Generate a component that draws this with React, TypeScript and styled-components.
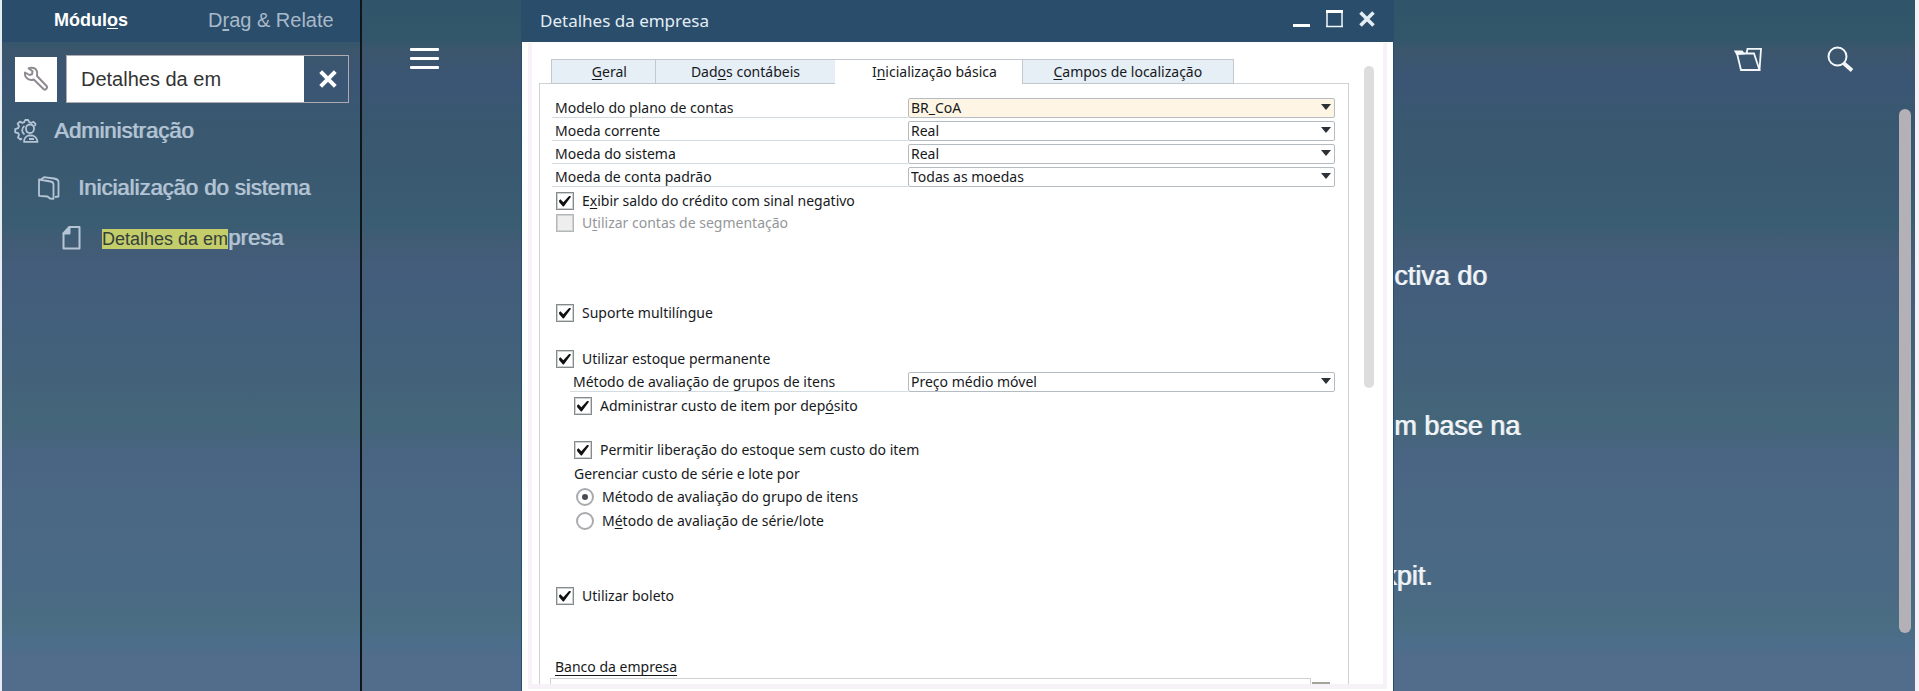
import React, { useState } from 'react';
import styled, { createGlobalStyle, css } from 'styled-components';

const uiFont = '"Liberation Sans", Arial, sans-serif';
const formFont = '"Noto Sans", "Open Sans", sans-serif';

const GlobalStyle = createGlobalStyle`
  * { box-sizing: border-box; }
  body { margin: 0; font-family: ${uiFont}; background: #f6f3f7; }
  button { border: 0; padding: 0; background: none; color: inherit; font: inherit; cursor: pointer; }
  svg { display: block; }
`;

const Desktop = styled.div`
  display: flex;
  min-height: 100vh;
  border-left: 2px solid #e6ecf0;
  border-right: 4px solid #f6f1f6;
  background: linear-gradient(
    #30556a 0, #32576a 38px, #3b566c 50px, #3b5575 80px, #395870 120px,
    #3a5a72 190px, #3a5d72 225px, #425c76 245px, #435d7b 270px, #425f7b 320px,
    #43627a 380px, #446679 425px, #4a6484 460px, #4a6884 500px, #4a6984 585px,
    #4a6d82 622px, #4c6e8c 645px, #526c8b 658px, #526d8c 100%
  );
`;

/* ---------- sidebar ---------- */

const Sidebar = styled.aside`
  flex: 0 0 360px;
  min-width: 0;
  border-right: 2px solid #10151a;
`;

const SidebarTabs = styled.div`
  display: flex;
  gap: 80px;
  height: 42px;
  padding: 0 0 2px 52px;
  align-items: center;
  background: #2a4d6b;
`;

const SidebarTab = styled.button<{ $active?: boolean }>`
  font-size: ${p => (p.$active ? 18 : 20)}px;
  font-weight: ${p => (p.$active ? 700 : 400)};
  line-height: 24px;
  color: ${p => (p.$active ? '#fff' : '#a9b9c9')};
`;

const SearchRow = styled.div`
  display: flex;
  align-items: center;
  gap: 9px;
  padding: 13px 11px 0 13px;
`;

const ToolButton = styled.button`
  display: grid;
  flex: none;
  place-items: center;
  width: 42px;
  height: 45px;
  background: #fff;
  color: #8f8a92;
`;

const SearchBox = styled.div`
  display: flex;
  flex: 1;
  min-width: 0;
  height: 48px;
  border: 1px solid #b0abae;
`;

const SearchInput = styled.input`
  flex: 1;
  min-width: 0;
  border: 0;
  outline: 0;
  padding: 0 14px;
  background: #fff;
  color: #333;
  font: 20px ${uiFont};
`;

const ClearButton = styled.button`
  display: grid;
  flex: none;
  place-items: center;
  width: 44px;
  padding-left: 3px;
  color: #fff;
`;

const Tree = styled.ul`
  list-style: none;
  margin: 0;
  padding: 14px 0 0 12px;
`;

const TreeItem = styled.li<{ $level: number }>`
  display: flex;
  align-items: center;
  height: ${p => (p.$level ? 50 : 28)}px;
  margin-top: ${p => (p.$level === 1 ? 18 : 0)}px;
  padding-left: ${p => p.$level * 24}px;
  color: #b5c5d5;
`;

const TreeIcon = styled.span`
  flex: none;
  width: 40px;
`;

const TreeLink = styled.a`
  color: inherit;
  font-size: 22px;
  line-height: 24px;
  text-decoration: none;
  text-shadow: 1px 0 0 rgba(181, 197, 213, 0.8);
  white-space: nowrap;
`;

const Match = styled.mark`
  background: #c3cd6a;
  color: #35403c;
  font-size: 18px;
  text-shadow: none;
`;

/* ---------- cockpit behind the window ---------- */

const MenuStrip = styled.nav`
  flex: 0 0 159px;
  padding: 48px 0 0 48px;
`;

const MenuButton = styled.button`
  display: flex;
  flex-direction: column;
  gap: 6px;
  width: 29px;
`;

const MenuLine = styled.span`
  height: 3px;
  width: 100%;
  border-radius: 1px;
  background: #fff;
`;

const Cockpit = styled.main`
  flex: 0 0 521px;
  display: flex;
  overflow: hidden;
`;

const CockpitContent = styled.div`
  flex: 1;
`;

const CockpitActions = styled.div`
  display: flex;
  justify-content: flex-end;
  gap: 64px;
  height: 261px;
  padding: 46px 45px 0 0;
  color: #f4f7fa;
`;

const IconButton = styled.button`
  width: 28px;
  height: 28px;
`;

const CockpitText = styled.p<{ $cut?: boolean }>`
  margin: 0 0 120px;
  text-indent: ${p => (p.$cut ? -11 : 0)}px;
  color: #f1f4f8;
  font-size: 27px;
  line-height: 30px;
  text-shadow: 1px 0 0 rgba(241, 244, 248, 0.8);
  white-space: nowrap;
`;

const ScrollThumb = styled.span<{ $wide?: boolean }>`
  flex: none;
  display: block;
  border-radius: 6px;
  ${p =>
    p.$wide
      ? css`width: 12px; height: 524px; margin: 109px 4px 0 0; background: #b3b1b5;`
      : css`width: 10px; height: 322px; margin: 23px 9px 0 15px; background: #ddd;`}
`;

/* ---------- company details window ---------- */

const Window = styled.section`
  flex: 1;
  display: flex;
  flex-direction: column;
  min-width: 0;
  border: solid #2a4d6b;
  border-width: 0 1px;
  background: #fff;
  color: #16191c;
  font-family: ${formFont};
`;

const TitleBar = styled.header`
  display: flex;
  align-items: center;
  height: 42px;
  padding: 0 18px;
  background: #2a4d6b;
  color: #e4edf5;
`;

const Title = styled.h1`
  flex: 1;
  margin: 0;
  font-size: 17px;
  font-weight: 400;
  line-height: 24px;
`;

const WindowButtons = styled.div`
  display: flex;
  gap: 15px;
  padding-bottom: 4px;
`;

const WindowBody = styled.div`
  display: flex;
  margin: 1px 6px 3px;
  border: solid #f7f2f7;
  border-width: 0 4px 5px;
`;

const Sheet = styled.div`
  flex: 1;
  min-width: 0;
  padding: 16px 0 0 7px;
`;

const Tabs = styled.div`
  display: flex;
  height: 25px;
  margin: 0 115px -1px 12px;
`;

const Tab = styled.button<{ $active?: boolean; $grow: number; $inset?: boolean }>`
  flex: ${p => p.$grow} 1 0;
  text-indent: ${p => (p.$inset ? 12 : 0)}px;
  border: 1px solid #c3c8ce;
  border-left-width: ${p => (p.$active ? 0 : 1)}px;
  border-bottom-color: ${p => (p.$active ? '#fff' : '#c3c8ce')};
  background: ${p => (p.$active ? '#fff' : '#e6eef6')};
  color: #16191c;
  font-size: 14px;
  line-height: 20px;
  white-space: nowrap;
  & + & { margin-left: ${p => (p.$active ? 0 : -1)}px; }
`;

const Panel = styled.form`
  padding: 14px 13px 0 12px;
  border: 1px solid #cfd2d5;
  border-bottom: 0;
`;

const Group = styled.div<{ $space?: number; $indent?: boolean }>`
  margin-top: ${p => p.$space ?? 0}px;
  margin-left: ${p => (p.$indent ? 18 : 0)}px;
`;

const FieldRow = styled.div<{ $nested?: boolean }>`
  display: grid;
  grid-template-columns: ${p => (p.$nested ? 338 : 356)}px 1fr;
  height: 20px;
  margin-bottom: 3px;
`;

const FieldLabel = styled.label`
  padding-left: 3px;
  border-bottom: 1px solid #d2dce1;
  font-size: 14px;
  line-height: 19px;
`;

const SelectWrap = styled.div`
  position: relative;
  &::after {
    content: '';
    position: absolute;
    top: 6px;
    right: 4px;
    border: 5px solid transparent;
    border-top: 6px solid #2c3136;
    border-bottom: 0;
    pointer-events: none;
  }
`;

const Select = styled.select<{ $focused?: boolean }>`
  display: block;
  appearance: none;
  width: 100%;
  height: 20px;
  margin: 0;
  padding: 0 2px;
  border: 1px solid #b5bcc1;
  border-radius: 2px;
  outline: 0;
  background: ${p => (p.$focused ? '#fff5e5' : '#fff')};
  color: #16191c;
  font: 14px/18px ${formFont};
`;

const Option = styled.label<{ $disabled?: boolean; $tall?: boolean }>`
  display: flex;
  align-items: center;
  gap: 8px;
  height: ${p => (p.$tall ? 24 : 22)}px;
  padding-left: ${p => (p.$tall ? 6 : 4)}px;
  color: ${p => (p.$disabled ? '#94979a' : '#16191c')};
  font-size: 14px;
  line-height: 20px;
`;

const Check = styled.input`
  appearance: none;
  display: grid;
  place-items: center;
  width: 18px;
  height: 18px;
  margin: 0;
  border: 1px solid #858b8d;
  box-shadow: inset 0 0 0 1px #cfd2d2;
  background: #fff;
  &:disabled { background: #eee; border-color: #b4b7b7; }
  &:checked::before {
    content: '';
    width: 12px;
    height: 11px;
    background: #111;
    clip-path: polygon(0 45%, 12% 34%, 36% 62%, 88% 0, 100% 12%, 40% 100%, 33% 100%, 2% 62%);
  }
`;

const Radio = styled.input`
  appearance: none;
  display: grid;
  place-items: center;
  width: 18px;
  height: 18px;
  margin: 0;
  border: 2px solid #aaabb0;
  border-radius: 50%;
  background: #fff;
  &:checked::before {
    content: '';
    width: 6px;
    height: 6px;
    border-radius: 50%;
    background: #4a4c55;
  }
`;

const Caption = styled.div`
  padding-left: 4px;
  font-size: 14px;
  line-height: 22px;
`;

const BankHeading = styled.h2`
  margin: 0 0 0 3px;
  font-size: 14px;
  font-weight: 400;
  line-height: 22px;
  text-decoration: underline;
  text-underline-offset: 3px;
`;

const BankRow = styled.div`
  display: flex;
  align-items: flex-end;
  gap: 1px;
  height: 6px;
  margin: 0 5px 0 -2px;
`;

const BankFrame = styled.div`
  flex: 1;
  height: 6px;
  border: 1px solid #ced2d2;
  border-bottom: 0;
`;

const BankButtonEdge = styled.span`
  width: 18px;
  height: 2px;
  background: #a3a59d;
`;

/* ---------- icons ---------- */

const Wrench = () => (
  <svg width="26" height="26" viewBox="0 0 26 26" fill="none" stroke="currentColor" strokeWidth="2" strokeLinejoin="round">
    <path d="M2 6.500 6.500 9 9 8.200 9.600 5.300 5.500 2.300C9 .8 13 2 14 5.500c.5 2-.2 3.600 0 4.500L24 20.500c.8 1-1.600 4-3 3L10.800 13.500C6 15.200 1.200 11.500 2 6.500Z" />
  </svg>
);

const Cross = ({ size }: { size: number }) => (
  <svg width={size} height={size} viewBox="0 0 16 16" stroke="currentColor" strokeWidth="3.600">
    <path d="M1.500 1.500 14.500 14.500M14.500 1.500 1.500 14.500" />
  </svg>
);

const AdminIcon = () => (
  <svg width="25" height="24" viewBox="0 0 25 24" fill="none" stroke="currentColor" strokeWidth="1.800" strokeLinejoin="round">
    <path d="M8 19.500 6.500 20.500 4 18.500 5 15.800 4.200 14.200 1.200 13.300V10.200L4.200 9.200 5 7.200 3.600 4.600 5.800 2.600 8.400 3.900 10.200 3.200 11.200 1H14.200L15.200 3.200 17.200 4 19.500 2.800 21.600 5 20.800 7" />
    <path d="M10.500 15.500A5 5 0 0 1 10.500 7" />
    <path d="M16 5.500c3 0 4.300 2 4 4.500-.3 2.600-1.500 4-4 4s-3.900-1.500-4-4c-.1-2.500 1-4.500 4-4.500Z" />
    <path d="M10 22.800c0-3.600 1.500-5.300 4.500-6.300h4c3 1 4.500 2.700 5 6.300ZM15 20h5" />
  </svg>
);

const FoldersIcon = () => (
  <svg width="22" height="24" viewBox="0 0 22 24" fill="none" stroke="currentColor" strokeWidth="1.800" strokeLinejoin="round">
    <path d="M1 3.500 12.500 5.500C15 6 15.500 7 15.500 8.500V22.800L12 22.500 9.500 20.500 1 19.800ZM3 3.500 6 1.200 16 2.500c3 .5 4.500 1.500 4.500 3.500v14.500L17 21" />
  </svg>
);

const PageIcon = () => (
  <svg width="19" height="24" viewBox="0 0 19 24" fill="none" stroke="currentColor" strokeWidth="2" strokeLinejoin="round">
    <path d="M7.500 1H17.500V22.500H1.500V7.500Z" />
    <path d="M7.500 1V7.500H1.500Z" fill="currentColor" />
  </svg>
);

const OpenFolder = () => (
  <svg width="28" height="28" viewBox="0 0 28 28" fill="none" stroke="currentColor" strokeWidth="1.800">
    <path d="M3 7.500H20L25.500 24H7Z" />
    <path d="M1.500 5.500H8L9.500 7.500 3 8Z" fill="currentColor" />
    <path d="M12.500 7.500 13.500 2.800H27L25.500 24" />
  </svg>
);

const Magnifier = () => (
  <svg width="28" height="28" viewBox="0 0 28 28" fill="none" stroke="currentColor">
    <circle cx="11.500" cy="10.500" r="9" strokeWidth="2" />
    <path d="M17.500 17 26 24.500" strokeWidth="3.800" />
  </svg>
);

const MinimizeIcon = () => (
  <svg width="18" height="18" viewBox="0 0 18 18"><path d="M0 14h17v3H0Z" fill="#fff" /></svg>
);

const MaximizeIcon = () => (
  <svg width="18" height="18" viewBox="0 0 18 18"><path d="M1 1V17M16 1V17M0 16.500H17" stroke="#f2f6f9" strokeWidth="1.500" /><path d="M0 0h17v3H0Z" fill="#fff" /></svg>
);

/* ---------- form parts ---------- */

const K = styled.u`
  text-underline-offset: 2px;
`;

interface FieldProps {
  id: string;
  label: string;
  value: string;
  focused?: boolean;
  nested?: boolean;
}

const Field = ({ id, label, value, focused, nested }: FieldProps) => (
  <FieldRow $nested={nested}>
    <FieldLabel htmlFor={id}>{label}</FieldLabel>
    <SelectWrap>
      <Select id={id} $focused={focused} defaultValue={value}>
        <option>{value}</option>
      </Select>
    </SelectWrap>
  </FieldRow>
);

interface CheckProps {
  children: React.ReactNode;
  disabled?: boolean;
}

const CheckOption = ({ children, disabled }: CheckProps) => (
  <Option $disabled={disabled}>
    <Check type="checkbox" defaultChecked={!disabled} disabled={disabled} />
    <span>{children}</span>
  </Option>
);

export default function App() {
  const [query, setQuery] = useState('Detalhes da em');

  return (
    <>
      <GlobalStyle />
      <Desktop>
        <Sidebar>
          <SidebarTabs>
            <SidebarTab $active>Módul<K>o</K>s</SidebarTab>
            <SidebarTab>D<K>r</K>ag &amp; Relate</SidebarTab>
          </SidebarTabs>
          <SearchRow>
            <ToolButton aria-label="Configurar"><Wrench /></ToolButton>
            <SearchBox>
              <SearchInput aria-label="Pesquisar" value={query} onChange={e => setQuery(e.target.value)} />
              <ClearButton aria-label="Limpar" onClick={() => setQuery('')}><Cross size={18} /></ClearButton>
            </SearchBox>
          </SearchRow>
          <Tree>
            <TreeItem $level={0}>
              <TreeIcon><AdminIcon /></TreeIcon>
              <TreeLink href="#administracao">Administração</TreeLink>
            </TreeItem>
            <TreeItem $level={1}>
              <TreeIcon><FoldersIcon /></TreeIcon>
              <TreeLink href="#inicializacao">Inicialização do sistema</TreeLink>
            </TreeItem>
            <TreeItem $level={2}>
              <TreeIcon><PageIcon /></TreeIcon>
              <TreeLink href="#detalhes"><Match>Detalhes da em</Match>presa</TreeLink>
            </TreeItem>
          </Tree>
        </Sidebar>

        <MenuStrip>
          <MenuButton aria-label="Menu"><MenuLine /><MenuLine /><MenuLine /></MenuButton>
        </MenuStrip>

        <Window>
          <TitleBar>
            <Title>Detalhes da empresa</Title>
            <WindowButtons>
              <button aria-label="Minimizar"><MinimizeIcon /></button>
              <button aria-label="Maximizar"><MaximizeIcon /></button>
              <button aria-label="Fechar"><Cross size={16} /></button>
            </WindowButtons>
          </TitleBar>
          <WindowBody>
            <Sheet>
              <Tabs>
                <Tab type="button" $grow={103} $inset><K>G</K>eral</Tab>
                <Tab type="button" $grow={180}>Dad<K>o</K>s contábeis</Tab>
                <Tab type="button" $grow={187} $active $inset>I<K>n</K>icialização básica</Tab>
                <Tab type="button" $grow={211}><K>C</K>ampos de localização</Tab>
              </Tabs>
              <Panel>
                <Group>
                  <Field id="plano" label="Modelo do plano de contas" value="BR_CoA" focused />
                  <Field id="corrente" label="Moeda corrente" value="Real" />
                  <Field id="sistema" label="Moeda do sistema" value="Real" />
                  <Field id="padrao" label="Moeda de conta padrão" value="Todas as moedas" />
                </Group>
                <Group $space={2}>
                  <CheckOption>E<K>x</K>ibir saldo do crédito com sinal negativo</CheckOption>
                  <CheckOption disabled>U<K>t</K>ilizar contas de segmentação</CheckOption>
                </Group>
                <Group $space={68}>
                  <CheckOption>Suporte multilíngue</CheckOption>
                </Group>
                <Group $space={24}>
                  <CheckOption>Utilizar estoque permanente</CheckOption>
                </Group>
                <Group $indent $space={2}>
                  <Field id="metodo" label="Método de avaliação de grupos de itens" value="Preço médio móvel" nested />
                  <CheckOption>Administrar custo de item por dep<K>ó</K>sito</CheckOption>
                </Group>
                <Group $indent $space={22}>
                  <CheckOption>Permitir liberação do estoque sem custo do item</CheckOption>
                </Group>
                <Group $indent $space={2} role="radiogroup" aria-labelledby="gerenciar">
                  <Caption id="gerenciar">Gerenciar custo de série e lote por</Caption>
                  <Option $tall>
                    <Radio type="radio" name="lote" defaultChecked />
                    <span>Método de avaliação do grupo de itens</span>
                  </Option>
                  <Option $tall>
                    <Radio type="radio" name="lote" />
                    <span>M<K>é</K>todo de avaliação de série/lote</span>
                  </Option>
                </Group>
                <Group $space={52}>
                  <CheckOption>Utilizar boleto</CheckOption>
                </Group>
                <Group $space={49}>
                  <BankHeading>Banco da empresa</BankHeading>
                  <BankRow><BankFrame /><BankButtonEdge /></BankRow>
                </Group>
              </Panel>
            </Sheet>
            <ScrollThumb />
          </WindowBody>
        </Window>

        <Cockpit>
          <CockpitContent>
            <CockpitActions>
              <IconButton aria-label="Abrir"><OpenFolder /></IconButton>
              <IconButton aria-label="Buscar"><Magnifier /></IconButton>
            </CockpitActions>
            <CockpitText>ctiva do</CockpitText>
            <CockpitText>m base na</CockpitText>
            <CockpitText $cut>kpit.</CockpitText>
          </CockpitContent>
          <ScrollThumb $wide />
        </Cockpit>
      </Desktop>
    </>
  );
}
